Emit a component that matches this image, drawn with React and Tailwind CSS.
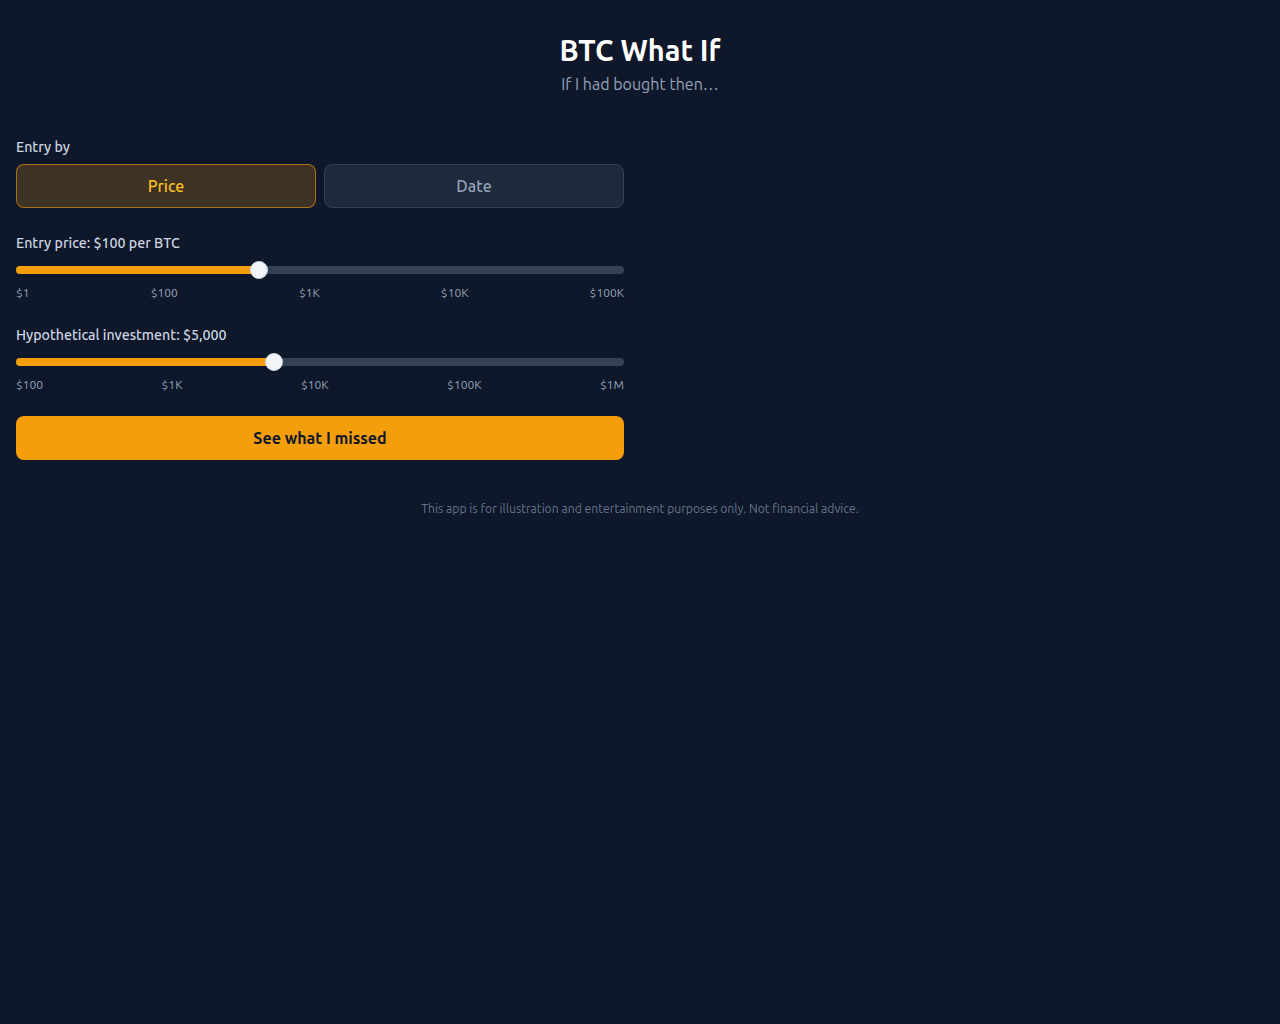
import { useState } from "react"

const PRICE_TICKS = ["$1", "$100", "$1K", "$10K", "$100K"]
const AMOUNT_TICKS = ["$100", "$1K", "$10K", "$100K", "$1M"]

// log-scale position of a value between min and max, as a percent
function logPct(value, min, max) {
  return ((Math.log10(value) - Math.log10(min)) / (Math.log10(max) - Math.log10(min))) * 100
}

function LogSlider({ label, value, min, max, ticks }) {
  const pct = logPct(value, min, max)
  return (
    <div>
      <div className="text-[14.2px] leading-5 font-medium text-[#cbd5e1]">{label}</div>
      <div className="relative mt-2 h-[18px]">
        <div className="absolute inset-x-0 top-[5px] h-2 rounded-full bg-[#334155]" />
        <div className="absolute left-0 top-[5px] h-2 rounded-full bg-[#f59e0b]" style={{ width: `${pct}%` }} />
        <div
          className="absolute top-0 h-[18px] w-[18px] -translate-x-1/2 rounded-full border border-[#cbd5e1] bg-[#f1f5f9]"
          style={{ left: `${pct}%` }}
        />
      </div>
      <div className="mt-[6px] flex justify-between text-xs text-[#94a3b8]">
        {ticks.map((t) => (
          <span key={t}>{t}</span>
        ))}
      </div>
    </div>
  )
}

const activeTab = "h-11 rounded-lg border border-[#f59e0b]/60 bg-[#f59e0b]/20 font-medium text-[#fbbf24]"
const idleTab = "h-11 rounded-lg border border-[#334155] bg-[#1e293b] font-medium text-[#94a3b8]"

export default function App() {
  const [mode, setMode] = useState("price")

  return (
    <div className="min-h-screen bg-[#0f172a] px-4 py-8 font-['Ubuntu','Noto_Sans',sans-serif] text-[#f1f5f9]">
      <header className="mb-[41px] text-center">
        <h1 className="text-[29px] leading-9 font-bold text-white">BTC What If</h1>
        <p className="mt-1 text-base text-[#94a3b8]">If I had bought then…</p>
      </header>

      <div className="grid grid-cols-2 gap-8">
        <div>
          <div className="text-[14.2px] leading-5 font-medium text-[#cbd5e1]">Entry by</div>
          <div className="mt-[7px] grid grid-cols-2 gap-2">
            <button onClick={() => setMode("price")} className={mode === "price" ? activeTab : idleTab}>
              Price
            </button>
            <button onClick={() => setMode("date")} className={mode === "date" ? activeTab : idleTab}>
              Date
            </button>
          </div>

          <div className="mt-[25px]">
            <LogSlider label="Entry price: $100 per BTC" value={100} min={1} max={100000} ticks={PRICE_TICKS} />
          </div>
          <div className="mt-6">
            <LogSlider label="Hypothetical investment: $5,000" value={5000} min={100} max={1000000} ticks={AMOUNT_TICKS} />
          </div>

          <button className="mt-[23px] h-11 w-full rounded-lg bg-[#f59e0b] font-bold text-[#0f172a]">See what I missed</button>
        </div>
        <div />
      </div>

      <p className="mt-[41px] text-center text-[12.2px] leading-4 text-[#64748b]">
        This app is for illustration and entertainment purposes only. Not financial advice.
      </p>
    </div>
  )
}
